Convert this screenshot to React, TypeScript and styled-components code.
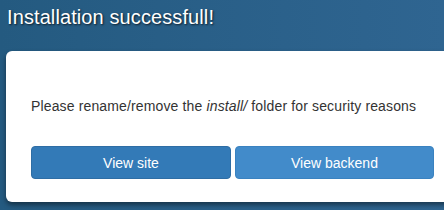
import React from 'react';
import styled, { createGlobalStyle } from 'styled-components';

const GlobalStyle = createGlobalStyle`
  html, body {
    margin: 0;
    padding: 0;
    overflow: hidden;
  }
  body {
    font-family: 'Liberation Sans', Arial, sans-serif;
  }
`;

const Page = styled.div`
  min-height: 210px;
  box-sizing: border-box;
  padding: 6px 0 0 6px;
  background: linear-gradient(to right, #245a80, #2f6591);
  overflow: hidden;
`;

const Title = styled.h1`
  margin: 0 0 23px 1px;
  font-size: 20px;
  line-height: 22px;
  font-weight: normal;
  letter-spacing: 0.1px;
  color: #fff;
  text-shadow: 1px 1px 2px rgba(0, 0, 0, 0.7);
  white-space: nowrap;
`;

const Card = styled.div`
  width: 453px;
  box-sizing: border-box;
  padding: 45px 25px 23px;
  background: #fff;
  border-radius: 6px;
  box-shadow: 0 3px 5px rgba(0, 0, 0, 0.45);
`;

const Message = styled.p`
  margin: 0 0 30px;
  font-size: 14px;
  line-height: 20px;
  letter-spacing: 0.14px;
  color: #333;
  white-space: nowrap;
`;

const Actions = styled.div`
  display: grid;
  grid-template-columns: 200px 199px;
  gap: 4px;
`;

const Button = styled.a<{ $tone: 'primary' | 'info' }>`
  display: flex;
  align-items: center;
  justify-content: center;
  height: 33px;
  box-sizing: border-box;
  border-radius: 4px;
  border: 1px solid ${p => (p.$tone === 'primary' ? '#2e6da4' : '#3a82c0')};
  background: ${p => (p.$tone === 'primary' ? '#337ab7' : '#428bca')};
  color: #fff;
  font-size: 14px;
  text-decoration: none;
  cursor: pointer;
`;

const App: React.FC = () => {
  return (
    <>
      <GlobalStyle />
      <Page>
        <Title>Installation successfull!</Title>
        <Card>
          <Message>
            Please rename/remove the <em>install/</em> folder for security reasons
          </Message>
          <Actions>
            <Button $tone="primary">View site</Button>
            <Button $tone="info">View backend</Button>
          </Actions>
        </Card>
      </Page>
    </>
  );
};

export default App;
